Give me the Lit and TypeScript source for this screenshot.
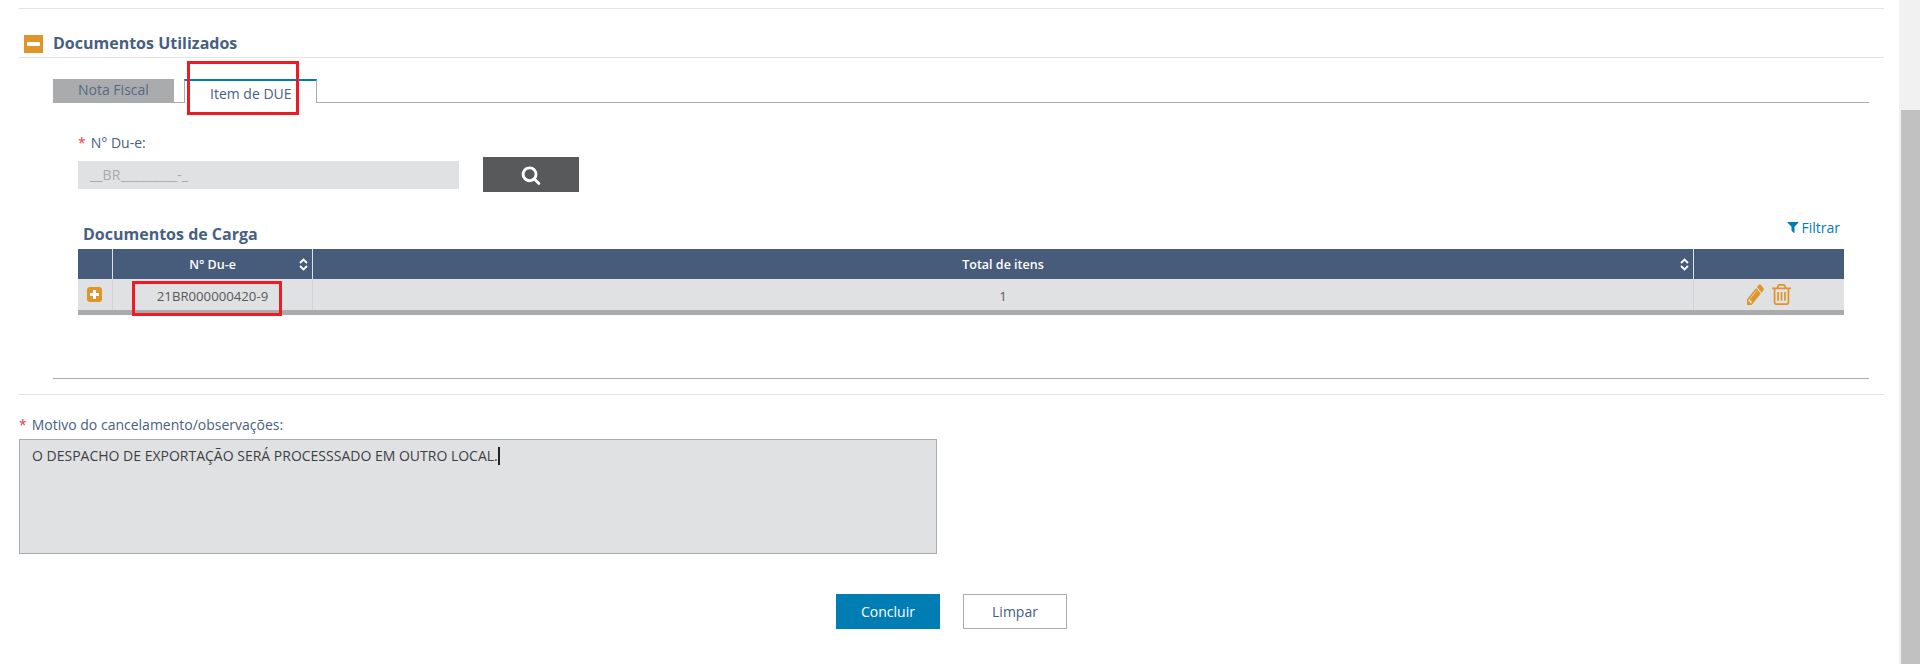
import { LitElement, html, css, svg } from "lit";
import { customElement } from "lit/decorators.js";

const pencil = svg`<path d="M491 1536l91-91-235-235-91 91v107h128v128h107zm523-928q0-22-22-22-10 0-17 7l-542 542q-7 7-7 17 0 22 22 22 10 0 17-7l542-542q7-7 7-17zm-54-192l416 416-832 832h-416v-416zm683 96q0 53-37 90l-166 166-416-416 166-165q36-38 90-38 53 0 91 38l235 234q37 39 37 91z"/>`;
const trash = svg`<path d="M704 736v576q0 14-9 23t-23 9h-64q-14 0-23-9t-9-23v-576q0-14 9-23t23-9h64q14 0 23 9t9 23zm256 0v576q0 14-9 23t-23 9h-64q-14 0-23-9t-9-23v-576q0-14 9-23t23-9h64q14 0 23 9t9 23zm256 0v576q0 14-9 23t-23 9h-64q-14 0-23-9t-9-23v-576q0-14 9-23t23-9h64q14 0 23 9t9 23zm128 724v-948h-896v948q0 22 7 40.500t14.500 27 10.500 8.500h832q3 0 10.500-8.500t14.500-27 7-40.500zm-672-1076h448l-48-117q-7-9-17-11h-317q-10 2-17 11zm928 32v64q0 14-9 23t-23 9h-96v948q0 83-47 143.500t-113 60.500h-832q-66 0-113-58.500t-47-141.500v-952h-96q-14 0-23-9t-9-23v-64q0-14 9-23t23-9h309l70-167q15-37 54-63t79-26h320q40 0 79 26t54 63l70 167h309q14 0 23 9t9 23z"/>`;
const filter = svg`<path d="M1595 295q17 41-14 70l-493 493v742q0 42-39 59-13 5-25 5-27 0-45-19l-256-256q-19-19-19-45v-486l-493-493q-31-29-14-70 17-39 59-39h1280q42 0 59 39z"/>`;
const search = svg`<path d="M1216 832q0-185-131.500-316.500t-316.500-131.500-316.500 131.500-131.500 316.500 131.500 316.500 316.500 131.500 316.500-131.500 131.500-316.500zm512 832q0 52-38 90t-90 38q-54 0-90-38l-343-342q-179 124-399 124-143 0-273.500-55.500t-225-150-150-225-55.500-273.500 55.500-273.500 150-225 225-150 273.500-55.500 273.500 55.500 225 150 150 225 55.500 273.500q0 220-124 399l343 343q37 37 37 90z"/>`;

@customElement("app-root")
export class AppRoot extends LitElement {
  static styles = css`
    :host {
      display: flex;
      position: relative;
      width: 1920px;
      height: 664px;
      overflow: hidden;
      background: #fff;
      font-family: "Open Sans", sans-serif;
      font-size: 14px;
      color: #47607f;
    }
    .main { flex: 1; min-width: 0; padding: 8px 15px 0 19px; box-sizing: border-box; }
    .rule { height: 1px; background: #e2e3e4; }
    .head { display: flex; align-items: flex-end; height: 48px; margin-left: 5px; gap: 10px; padding-bottom: 4px; box-sizing: border-box; }
    .toggle { width: 19px; height: 18px; background: #e0952a; display: flex; align-items: center; justify-content: center; }
    .toggle i { display: block; width: 13px; height: 4px; background: #fff; border-radius: 1px; }
    .head h2 { margin: 0; font-size: 16px; line-height: 20px; font-weight: 700; color: #47607f; }
    .inner { margin: 21px 15px 0 34px; }
    .tabs { display: flex; height: 24px; align-items: flex-start; box-shadow: inset 0 -1px 0 #aaabad; }
    .tab { box-sizing: border-box; height: 24px; line-height: 22px; padding-left: 25px; }
    .tab.off { width: 121px; background: #aaabad; color: #556a86; }
    .tab.on { width: 133px; margin-left: 10px; background: #fff; border: 1px solid #aaabad; border-top: 2px solid #007db3; border-bottom: 0; line-height: 25px; color: #47607f; }
    .body { margin: 0 25px; }
    label.f { display: block; line-height: 18px; color: #47607f; }
    .star { color: #ee3a43; margin-right: 5px; }
    .f1 { margin-top: 31px; }
    .search { display: flex; align-items: flex-start; gap: 24px; margin-top: 5px; }
    .mask { box-sizing: border-box; width: 381px; height: 28px; margin-top: 4px; background: #e0e1e3; color: #a9aaac; line-height: 28px; padding-left: 12px; letter-spacing: 0.17px; }
    .btn-s { width: 96px; height: 35px; background: #58595b; display: flex; align-items: center; justify-content: center; }
    .btn-s svg { width: 20px; height: 20px; fill: #fff; }
    .gridhead { display: flex; justify-content: space-between; height: 57px; padding: 0 4px 0 5px; box-sizing: border-box; }
    .gridhead h3 { margin: 32px 0 0; font-size: 16px; line-height: 20px; font-weight: 700; color: #47607f; }
    .filtrar { display: flex; align-items: center; gap: 1px; color: #007db3; height: 20px; margin-top: 25px; }
    .filtrar svg { width: 14px; height: 14px; fill: #007db3; }
    .table { display: grid; grid-template-columns: 34px 200px 1fr 151px; border-bottom: 5px solid #aaabad; }
    .th { height: 30px; background: #475c7a; color: #fff; font-size: 12.5px; font-weight: 600; display: flex; align-items: center; justify-content: center; position: relative; box-sizing: border-box; }
    .th + .th { border-left: 1px solid #e0e1e3; }
    .sort { position: absolute; right: 4px; top: 9px; width: 9px; height: 13px; fill: none; stroke: #fff; stroke-width: 1.8; }
    .td { height: 31px; background: #e0e1e3; color: #58595b; font-size: 13.2px; display: flex; align-items: center; justify-content: center; box-sizing: border-box; }
    .td.txt { padding-top: 2px; }
    .td + .td { border-left: 1px solid #d2d3d5; }
    .plus { width: 15px; height: 15px; background: #e0952a; border-radius: 3px; position: relative; margin-right: 1px; }
    .plus::before, .plus::after { content: ""; position: absolute; background: #fff; }
    .plus::before { left: 3px; right: 3px; top: 6px; height: 3px; }
    .plus::after { top: 3px; bottom: 3px; left: 6px; width: 3px; }
    .act { gap: 8px; }
    .act svg { fill: #e0952a; }
    .pen { width: 17px; height: 21px; }
    .bin { width: 19px; height: 21px; }
    .rule2 { height: 1px; margin-top: 63px; background: #aaabad; }
    .rule3 { margin-top: 15px; }
    .motivo { margin-top: 21px; }
    .area { box-sizing: border-box; width: 918px; height: 115px; margin-top: 5px; background: #e0e1e3; border: 1px solid #aaabad; color: #3d3f42; line-height: 18px; padding: 7px 12px; }
    .caret { display: inline-block; width: 2px; height: 18px; background: #222; vertical-align: -4px; }
    .actions { display: flex; gap: 23px; margin-top: 40px; padding-left: 817px; }
    .b { box-sizing: border-box; width: 104px; height: 35px; display: flex; align-items: center; justify-content: center; }
    .b.p { background: #007db3; color: #fff; }
    .b.s { border: 1px solid #aaabad; color: #47607f; background: #fff; }
    .track { width: 21px; flex: none; background: #f1f1f1; display: flex; flex-direction: column; align-items: flex-end; padding-top: 110px; box-sizing: border-box; }
    .thumb { width: 19px; flex: 1; background: #c1c1c1; }
    .mark { position: absolute; box-sizing: border-box; border: 3px solid #ed1c24; pointer-events: none; }
    .m1 { left: 187px; top: 61px; width: 112px; height: 54px; }
    .m2 { left: 132px; top: 281px; width: 150px; height: 35px; }
  `;

  render() {
    return html`
      <div class="main">
        <div class="rule"></div>
        <div class="head">
          <span class="toggle"><i></i></span>
          <h2>Documentos Utilizados</h2>
        </div>
        <div class="rule"></div>
        <div class="inner">
          <div class="tabs">
            <div class="tab off">Nota Fiscal</div>
            <div class="tab on">Item de DUE</div>
          </div>
          <div class="body">
            <label class="f f1"><span class="star">*</span>N° Du-e:</label>
            <div class="search">
              <div class="mask">__BR_________-_</div>
              <div class="btn-s"><svg viewBox="0 0 1792 1792">${search}</svg></div>
            </div>
            <div class="gridhead">
              <h3>Documentos de Carga</h3>
              <span class="filtrar"><svg viewBox="0 0 1792 1792">${filter}</svg>Filtrar</span>
            </div>
            <div class="table">
              <div class="th"></div>
              <div class="th">N° Du-e${this.sort()}</div>
              <div class="th">Total de itens${this.sort()}</div>
              <div class="th"></div>
              <div class="td"><span class="plus"></span></div>
              <div class="td txt">21BR000000420-9</div>
              <div class="td txt">1</div>
              <div class="td act">
                <svg class="pen" viewBox="128 128 1536 1536" preserveAspectRatio="none">${pencil}</svg>
                <svg class="bin" viewBox="192 128 1408 1536" preserveAspectRatio="none">${trash}</svg>
              </div>
            </div>
          </div>
          <div class="rule2"></div>
        </div>
        <div class="rule rule3"></div>
        <label class="f motivo"><span class="star">*</span>Motivo do cancelamento/observações:</label>
        <div class="area">O DESPACHO DE EXPORTAÇÃO SERÁ PROCESSSADO EM OUTRO LOCAL.<span class="caret"></span></div>
        <div class="actions">
          <div class="b p">Concluir</div>
          <div class="b s">Limpar</div>
        </div>
      </div>
      <div class="track"><div class="thumb"></div></div>
      <div class="mark m1"></div>
      <div class="mark m2"></div>
    `;
  }

  private sort() {
    return html`<svg class="sort" viewBox="0 0 9 13"><path d="M1 5l3.500-3.500L8 5M1 8l3.500 3.500L8 8"/></svg>`;
  }
}
